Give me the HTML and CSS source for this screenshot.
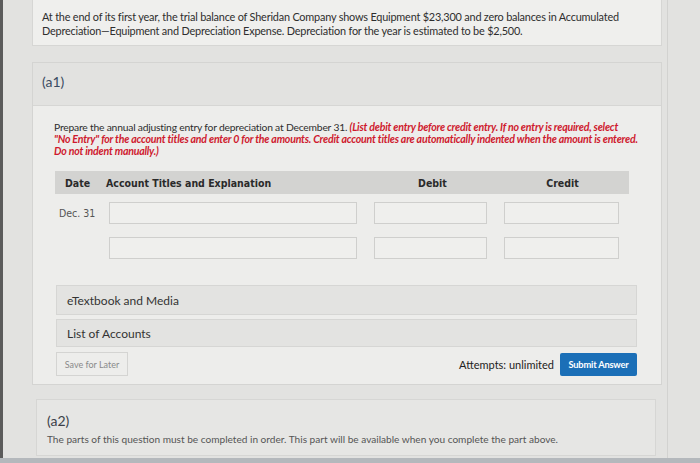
FILE: index.html
```html
<!DOCTYPE html>
<html>
<head>
<meta charset="utf-8">
<link rel="stylesheet" href="styles.css">
</head>
<body>
<div class="screen">
  <div class="row">
    <div class="edge"></div>
    <div class="main">
      <div class="intro">
        At the end of its first year, the trial balance of Sheridan Company shows Equipment $23,300 and zero balances in Accumulated Depreciation—Equipment and Depreciation Expense. Depreciation for the year is estimated to be $2,500.
      </div>

      <div class="part">
        <div class="part-head">(a1)</div>
        <div class="part-body">
          <p class="prompt">Prepare the annual adjusting entry for depreciation at December 31. <em class="note">(List debit entry before credit entry. If no entry is required, select<br>"No Entry" for the account titles and enter 0 for the amounts. Credit account titles are automatically indented when the amount is entered.<br>Do not indent manually.)</em></p>

          <div class="journal">
            <div class="jhead">
              <span class="h-date">Date</span>
              <span class="h-acct">Account Titles and Explanation</span>
              <span class="h-num">Debit</span>
              <span></span>
              <span class="h-num">Credit</span>
            </div>
            <div class="jrow">
              <span class="date">Dec. 31</span>
              <span class="inp"></span>
              <span class="inp"></span>
              <span class="inp"></span>
            </div>
            <div class="jrow">
              <span class="date"></span>
              <span class="inp"></span>
              <span class="inp"></span>
              <span class="inp"></span>
            </div>
          </div>

          <div class="bar first">eTextbook and Media</div>
          <div class="bar">List of Accounts</div>

          <div class="actions">
            <span class="save">Save for Later</span>
            <span class="attempts">Attempts: unlimited</span>
            <span class="submit">Submit Answer</span>
          </div>
        </div>
      </div>

      <div class="part2">
        <div class="p2-head">(a2)</div>
        <div class="p2-text">The parts of this question must be completed in order. This part will be available when you complete the part above.</div>
      </div>
    </div>
  </div>
  <div class="bottom"></div>
</div>
</body>
</html>
```

FILE: styles.css
```css
html, body {
  margin: 0;
  padding: 0;
}
body {
  width: 700px;
  height: 463px;
  overflow: hidden;
  background: #e2e2e0;
  font-family: Lato, "Open Sans", sans-serif;
  color: #2e2e2e;
}
.screen {
  display: flex;
  flex-direction: column;
  height: 463px;
}
.row {
  display: flex;
  flex: 1;
  min-height: 0;
}
.edge {
  width: 3px;
  background: #5b5b5b;
  flex: none;
}
.main {
  flex: 1;
  padding: 0 5px 0 29px;
  display: flex;
  flex-direction: column;
  border-right: 1px solid #d2d2d0;
  margin-right: 32px;
}
.intro {
  background: #efefed;
  border: 1px solid #d6d6d4;
  border-top: none;
  padding: 10px 8px 5px 9px;
  font-size: 10.9px;
  line-height: 14px;
  height: 30px;
  letter-spacing: -0.2px;
}
.part {
  margin-top: 16px;
  border: 1px solid #d4d4d2;
  background: #ededeb;
}
.part-head {
  height: 32px;
  background: #e2e2e0;
  border-bottom: 1px solid #d6d6d4;
  padding: 10px 0 0 9px;
  font-size: 14px;
  line-height: 18px;
  color: #3b4b62;
}
.part-body {
  padding: 16px 0 8px 21px;
}
.prompt {
  margin: 0;
  font-size: 10.3px;
  line-height: 11.8px;
  letter-spacing: -0.2px;
  width: 600px;
  white-space: nowrap;
}
.note {
  color: #cf1a2e;
  font-weight: bold;
  font-style: italic;
  font-size: 10.6px;
  letter-spacing: -0.22px;
}
.journal {
  margin-top: 14px;
  width: 574px;
  margin-left: 1px;
}
.jhead {
  display: grid;
  grid-template-columns: 51px 270px 113px 16px 115px;
  height: 23px;
  align-items: center;
  background: #d3d3d1;
  font-family: "DejaVu Sans", sans-serif;
  font-stretch: condensed;
  font-weight: bold;
  font-size: 10.5px;
  color: #2a2a2a;
}
.h-date {
  padding-left: 10px;
}
.h-num {
  text-align: center;
}
.jrow {
  display: grid;
  grid-template-columns: 37px 248px 113px 115px;
  column-gap: 17px;
  align-items: center;
  margin-top: 8px;
  height: 22px;
}
.jrow + .jrow {
  margin-top: 13px;
}
.date {
  font-family: "DejaVu Sans", sans-serif;
  font-stretch: condensed;
  font-size: 10.5px;
  color: #555;
  padding-left: 4px;
  white-space: nowrap;
}
.inp {
  height: 20px;
  border: 1px solid #cfcfcd;
  background: #efefed;
}
.bar {
  width: 569px;
  height: 26px;
  border: 1px solid #d6d6d4;
  background: #e3e3e1;
  display: flex;
  align-items: center;
  padding-left: 10px;
  margin-left: 2px;
  margin-top: 4px;
  font-size: 12px;
  color: #333;
}
.bar.first {
  margin-top: 26px;
  height: 28px;
}
.actions {
  display: flex;
  align-items: center;
  margin-top: 5px;
  margin-left: 2px;
  width: 581px;
}
.save {
  width: 70px;
  height: 22px;
  border: 1px solid #d4d4d2;
  display: flex;
  align-items: center;
  justify-content: center;
  font-size: 9px;
  color: #8a8a8a;
}
.attempts {
  margin-left: auto;
  font-size: 11px;
  color: #222;
  margin-right: 6px;
}
.submit {
  width: 77px;
  height: 23px;
  background: #1b6fb7;
  border-radius: 2px;
  color: #fff;
  font-weight: bold;
  font-size: 9.3px;
  letter-spacing: -0.2px;
  display: flex;
  align-items: center;
  justify-content: center;
}
.part2 {
  margin: 14px 6px 0 4px;
  border: 1px solid #d6d6d4;
  background: #e6e6e4;
  height: 55px;
  padding-left: 10px;
}
.p2-head {
  margin-top: 12px;
  font-size: 14px;
  line-height: 18px;
  color: #3a3f48;
}
.p2-text {
  margin-top: 3px;
  font-size: 10.1px;
  color: #555;
}
.bottom {
  height: 5px;
  background: #b4b8bc;
  flex: none;
}
```
